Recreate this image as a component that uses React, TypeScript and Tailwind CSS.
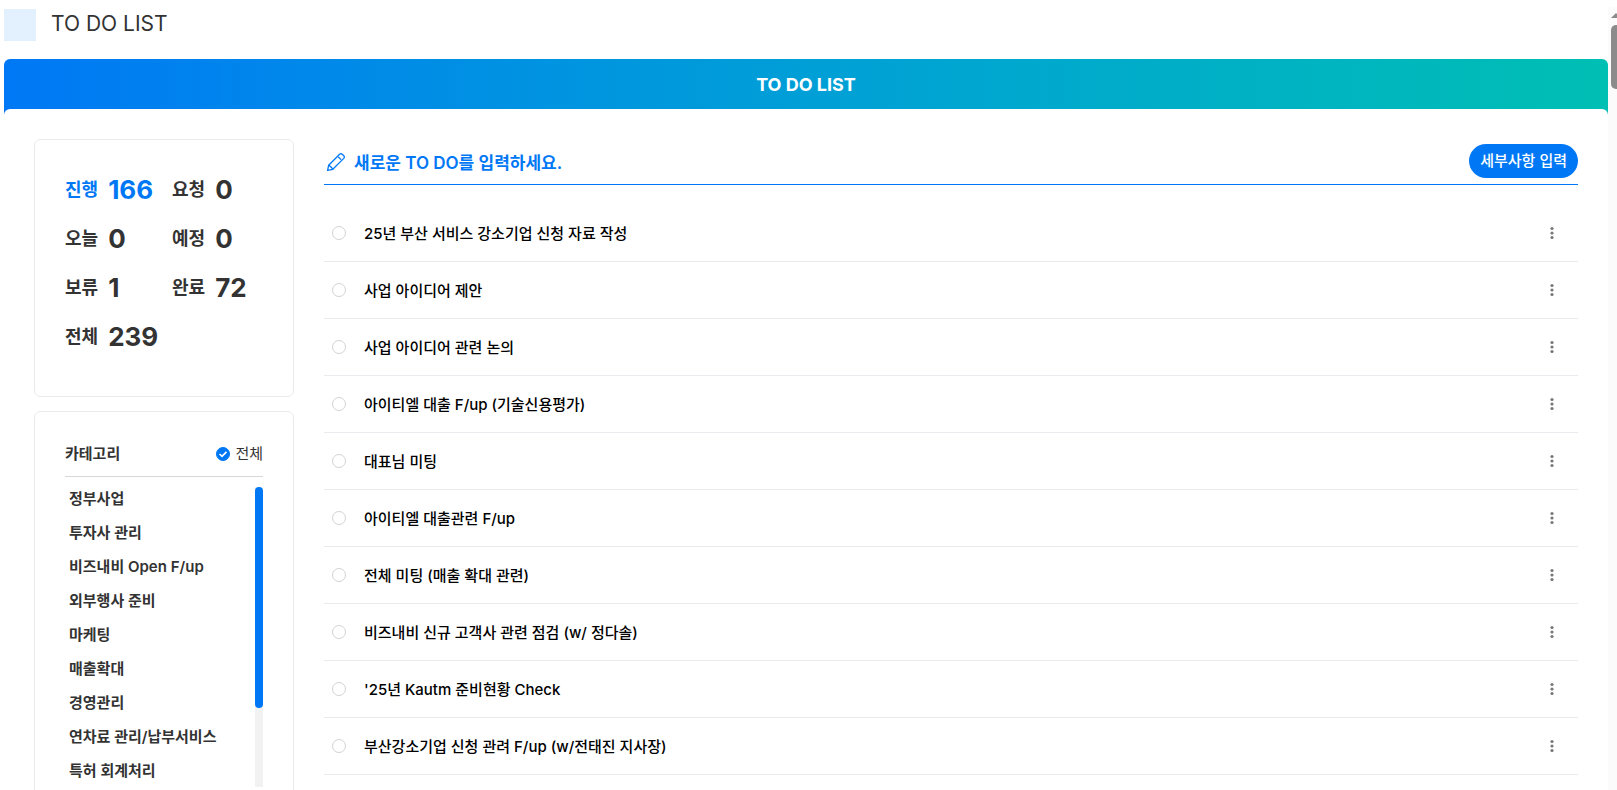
import { useState } from 'react';

const stats = [
  { label: '진행', count: 166 },
  { label: '요청', count: 0 },
  { label: '오늘', count: 0 },
  { label: '예정', count: 0 },
  { label: '보류', count: 1 },
  { label: '완료', count: 72 },
  { label: '전체', count: 239 },
];

const categories = [
  '정부사업',
  '투자사 관리',
  '비즈내비 Open F/up',
  '외부행사 준비',
  '마케팅',
  '매출확대',
  '경영관리',
  '연차료 관리/납부서비스',
  '특허 회계처리',
];

const todos = [
  '25년 부산 서비스 강소기업 신청 자료 작성',
  '사업 아이디어 제안',
  '사업 아이디어 관련 논의',
  '아이티엘 대출 F/up (기술신용평가)',
  '대표님 미팅',
  '아이티엘 대출관련 F/up',
  '전체 미팅 (매출 확대 관련)',
  '비즈내비 신규 고객사 관련 점검 (w/ 정다솔)',
  "'25년 Kautm 준비현황 Check",
  '부산강소기업 신청 관려 F/up (w/전태진 지사장)',
];

function PencilIcon() {
  return (
    <svg width="20" height="20" viewBox="0 0 20 20" fill="none" stroke="currentColor" strokeWidth="1.3" strokeLinejoin="round" strokeLinecap="round">
      <path d="M1.6 18.4l1.1-5.2L13.6 2.2a1.8 1.8 0 0 1 2.6 0l1.6 1.6a1.8 1.8 0 0 1 0 2.6L6.8 17.3z" />
      <path d="M2.9 13.2l2.1 1.8 1.8 2.1M12.6 5.2l2.2 2.2" />
    </svg>
  );
}

function MoreIcon() {
  return (
    <svg width="4" height="14" viewBox="0 0 4 14" fill="#777">
      <circle cx="2" cy="2.5" r="1.6" />
      <circle cx="2" cy="7" r="1.6" />
      <circle cx="2" cy="11.5" r="1.6" />
    </svg>
  );
}

function StatusCard() {
  const [active, setActive] = useState('진행');

  return (
    <section className="h-[258px] rounded-md border border-[#e9eaee] px-[30px] pt-[25px]">
      <div className="grid grid-cols-[107px_1fr]">
        {stats.map((item) => (
          <button
            key={item.label}
            type="button"
            onClick={() => setActive(item.label)}
            className={`flex h-[49px] items-center gap-2.5 ${active === item.label ? 'text-[#0078f5]' : 'text-[#333]'}`}
          >
            <span className="text-[18px] font-semibold">{item.label}</span>
            <span className="text-[26px] font-bold">{item.count}</span>
          </button>
        ))}
      </div>
    </section>
  );
}

function CategoryCard() {
  const [all, setAll] = useState(true);

  return (
    <section className="rounded-md border border-[#e9eaee] px-[30px] pt-[30px] pb-8 text-[#333]">
      <div className="flex h-[35px] items-start justify-between border-b border-[#d8d8dc] text-[15px] leading-6">
        <h2 className="font-semibold">카테고리</h2>
        <label className="flex items-center gap-[5px]">
          <span className="grid items-center">
            <input
              type="checkbox"
              checked={all}
              onChange={() => setAll(!all)}
              className="col-start-1 row-start-1 size-3.5 appearance-none rounded-full border border-[#d3d3d3] checked:border-[#0078f5] checked:bg-[#0078f5]"
            />
            <svg className="pointer-events-none col-start-1 row-start-1" width="14" height="14" viewBox="0 0 14 14" fill="none" stroke="#fff" strokeWidth="1.6">
              <path d="M3.6 7l2.4 2.4 4.5-4.5" />
            </svg>
          </span>
          전체
        </label>
      </div>
      <div className="mt-2.5 flex h-[300px] overflow-hidden">
        <ul className="flex-1 pl-1">
          {categories.map((name) => (
            <li key={name} className="h-[34px]">
              <button type="button" className="flex h-6 items-center text-[15px] font-semibold">
                {name}
              </button>
            </li>
          ))}
        </ul>
        <div className="w-2 bg-[#f2f2f2]">
          <div className="h-[221px] rounded-full bg-[#0078f5]" />
        </div>
      </div>
    </section>
  );
}

function TodoPanel() {
  return (
    <section className="min-w-0 flex-1">
      <form className="flex h-[46px] items-start border-b border-[#0078f5] pt-[5px] text-[#0078f5]">
        <label htmlFor="new-todo" className="ml-0.5 flex h-9 items-center">
          <PencilIcon />
        </label>
        <input
          id="new-todo"
          type="text"
          placeholder="새로운 TO DO를 입력하세요."
          className="ml-2 h-[38px] flex-1 bg-transparent text-[17px] font-semibold outline-none placeholder:text-[#0078f5]"
        />
        <button type="button" className="h-[34px] rounded-full bg-[#0078f5] px-[11px] text-[15px] font-medium text-white">
          세부사항 입력
        </button>
      </form>

      <ul className="mt-5">
        {todos.map((todo, i) => (
          <li key={todo} className="flex h-[57px] items-center border-b border-[#e9eaee] pr-6 pl-2">
            <input
              id={`todo-${i}`}
              type="checkbox"
              className="size-3.5 appearance-none rounded-full border border-[#d3d3d3] checked:bg-[#0078f5]"
            />
            <label htmlFor={`todo-${i}`} className="ml-[18px] flex-1 pt-0.5 text-[15px] font-medium text-black">
              {todo}
            </label>
            <button type="button" aria-label="더보기">
              <MoreIcon />
            </button>
          </li>
        ))}
      </ul>
    </section>
  );
}

export default function App() {
  return (
    <div className="flex h-screen overflow-hidden bg-white pl-1 font-['Inter','Noto_Sans_CJK_KR',sans-serif]">
      <main className="min-w-0 flex-1">
        <header className="flex h-[59px] items-start gap-[15px] pt-[9px]">
          <div className="size-8 bg-[#e3f0fd]" />
          <h1 className="text-[21px] leading-[30px] text-[#333]">TO DO LIST</h1>
        </header>

        <div className="rounded-t-md bg-linear-to-r from-[#0078f5] to-[#00bfb3]">
          <div className="flex h-[50px] items-center justify-center text-[18px] font-bold text-white">TO DO LIST</div>
          <div className="flex items-start gap-[30px] rounded-t-md bg-white p-[30px]">
            <aside className="flex w-[260px] shrink-0 flex-col gap-3.5">
              <StatusCard />
              <CategoryCard />
            </aside>
            <TodoPanel />
          </div>
        </div>
      </main>

      {/* Page scrollbar */}
      <div className="mt-[7px] w-[9px] overflow-hidden bg-[#fbfbfb] pl-[3px]">
        <svg width="10" height="18" viewBox="0 0 10 18" fill="#8b8b8b">
          <path d="M0 11l5-5 5 5z" />
        </svg>
        <div className="h-16 w-2.5 rounded-full bg-[#8b8b8b]" />
      </div>
    </div>
  );
}
